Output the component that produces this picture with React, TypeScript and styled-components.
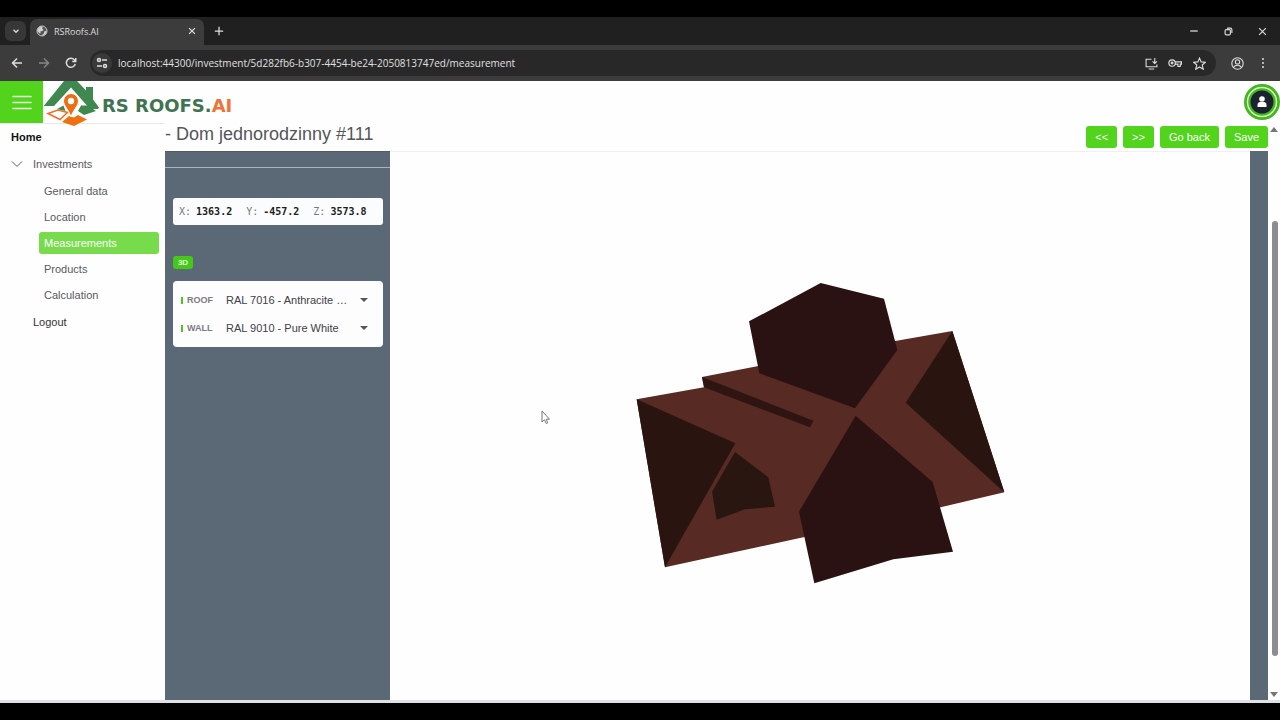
import React from "react";
import styled, { createGlobalStyle } from "styled-components";

const GlobalStyle = createGlobalStyle`
  * { box-sizing: border-box; }
  body { margin: 0; background: #000; }
  button, select, input { font: inherit; }
  svg { display: block; flex: none; }
`;

const green = "#52d31c";
const slate = "#5b6976";

const Screen = styled.div`
  min-height: 100vh;
  display: flex;
  flex-direction: column;
  padding: 17px 0;
  background: #000;
  font-family: "Liberation Sans", Arial, sans-serif;
  font-size: 11px;
`;

const TabStrip = styled.div`
  height: 28px;
  display: flex;
  align-items: center;
  padding-left: 5px;
  background: #202020;
  color: #dcdcdc;
`;

const ChromeButton = styled.button<{ $w?: number; $dim?: boolean }>`
  width: ${(p) => p.$w ?? 26}px;
  height: 20px;
  display: flex;
  flex: none;
  align-items: center;
  justify-content: center;
  padding: 0;
  border: 0;
  background: transparent;
  color: ${(p) => (p.$dim ? "#868686" : "#dedede")};
`;

const TabSearch = styled(ChromeButton)`
  border-radius: 6px;
  background: #373737;
`;

const Tab = styled.div`
  width: 174px;
  height: 26px;
  align-self: flex-end;
  display: flex;
  align-items: center;
  gap: 6px;
  margin-left: 4px;
  padding: 0 4px 2px 6px;
  border-radius: 7px 7px 0 0;
  background: #3c3c3c;
  font: 9px "Open Sans", sans-serif;
  color: #dedede;
`;

const TabTitle = styled.span`
  flex: 1;
`;

const WindowControls = styled.div`
  display: flex;
  margin-left: auto;
`;

const Toolbar = styled.div`
  height: 36px;
  display: flex;
  align-items: center;
  padding: 0 4px;
  background: #3c3c3c;
`;

const AddressBar = styled.div`
  flex: 1;
  height: 26px;
  display: flex;
  align-items: center;
  margin: 0 8px 0 6px;
  padding: 0 5px 0 2px;
  border-radius: 13px;
  background: #282828;
`;

const SiteInfo = styled(ChromeButton)`
  width: 20px;
  border-radius: 10px;
  background: #3a3a3a;
`;

const Address = styled.input`
  flex: 1;
  min-width: 0;
  margin-left: 6px;
  padding: 0;
  border: 0;
  outline: 0;
  background: transparent;
  font: 10px "Open Sans", sans-serif;
  color: #e0e0e0;
`;

const Page = styled.div`
  flex: 1;
  display: flex;
  flex-direction: column;
  background: #fefefe;
  border-bottom: 3px solid #dfe2e5;
`;

const Header = styled.header`
  position: relative;
  z-index: 1;
  height: 42px;
  display: flex;
  align-items: flex-start;
`;

const MenuButton = styled.button`
  width: 43px;
  height: 42px;
  display: flex;
  align-items: center;
  justify-content: center;
  padding: 0;
  border: 0;
  background: ${green};
`;

const Brand = styled.a`
  display: flex;
  align-items: flex-start;
  gap: 2px;
  text-decoration: none;
`;

const BrandName = styled.span`
  margin-top: 15px;
  font: 700 18px/20px "DejaVu Sans", sans-serif;
  color: #3f7351;
`;

const BrandAccent = styled.span`
  color: #ee7439;
`;

const Avatar = styled.button`
  width: 36px;
  height: 36px;
  margin: 3px 0 0 auto;
  padding: 0;
  border: 0;
  background: transparent;
`;

const Body = styled.div`
  flex: 1;
  display: flex;
`;

const Sidebar = styled.nav`
  width: 165px;
  flex: none;
  padding: 2px 6px 0 11px;
  border-top: 1px solid #ebe8ec;
`;

const NavList = styled.ul<{ $nested?: boolean }>`
  display: flex;
  flex-direction: column;
  gap: ${(p) => (p.$nested ? 4 : 5)}px;
  margin: ${(p) => (p.$nested ? "5px 0 0 28px" : "0")};
  padding: 0;
  list-style: none;
`;

const NavLink = styled.a<{ $kind?: "strong" | "active" | "child" | "dark"; $indent?: number }>`
  height: 22px;
  display: flex;
  align-items: center;
  padding-left: ${(p) => p.$indent ?? 0}px;
  border-radius: 3px;
  gap: 10px;
  text-decoration: none;
  font-weight: ${(p) => (p.$kind === "strong" ? 700 : 400)};
  background: ${(p) => (p.$kind === "active" ? "#77db4b" : "transparent")};
  color: ${(p) =>
    p.$kind === "active" ? "#fff" : p.$kind === "strong" ? "#111" : p.$kind === "dark" ? "#333" : "#5a5a5f"};
`;

const Main = styled.main`
  flex: 1;
  min-width: 0;
  display: flex;
  flex-direction: column;
`;

const TitleRow = styled.div`
  height: 28px;
  display: flex;
  align-items: center;
  justify-content: space-between;
`;

const Title = styled.h1`
  margin: 0 0 6px;
  font-size: 18px;
  line-height: 22px;
  font-weight: 400;
  color: #55555a;
`;

const Actions = styled.div`
  display: flex;
  gap: 6px;
`;

const ActionButton = styled.button`
  height: 22px;
  padding: 0 9px;
  border: 0;
  border-radius: 3px;
  background: ${green};
  color: #fff;
`;

const Workspace = styled.div`
  flex: 1;
  display: flex;
  padding-right: 18px;
  background: ${slate};
`;

const Panel = styled.aside`
  width: 225px;
  flex: none;
  display: flex;
  flex-direction: column;
  align-items: flex-start;
  border-top: 1px solid #585667;
`;

const PanelHead = styled.div`
  width: 100%;
  height: 16px;
  border-bottom: 1px solid #a3b5bf;
`;

const Coordinates = styled.dl`
  width: 210px;
  height: 27px;
  display: flex;
  align-items: center;
  gap: 14px;
  margin: 30px 0 0 8px;
  padding: 0 6px;
  border-radius: 3px;
  background: #fbfcfd;
  font: 10px "DejaVu Sans Mono", monospace;
`;

const Coordinate = styled.div`
  display: flex;
  gap: 5px;
`;

const Axis = styled.dt`
  color: #777;
`;

const AxisValue = styled.dd`
  margin: 0;
  font-weight: 700;
  color: #1c1c1c;
`;

const ModeButton = styled.button`
  width: 20px;
  height: 13px;
  margin: 31px 0 0 8px;
  padding: 0;
  border: 0;
  border-radius: 3px;
  background: #46c81a;
  font-size: 8px;
  line-height: 13px;
  font-weight: 700;
  color: #dcffd0;
`;

const ColorCard = styled.div`
  width: 210px;
  display: flex;
  flex-direction: column;
  margin: 12px 0 0 8px;
  padding: 5px 8px;
  border-radius: 4px;
  background: #fdfdfe;
`;

const ColorRow = styled.div`
  position: relative;
  height: 28px;
  display: flex;
  align-items: center;
`;

const ColorLabel = styled.label`
  width: 45px;
  display: flex;
  align-items: center;
  gap: 4px;
  font-size: 9px;
  font-weight: 700;
  color: #7b7b80;

  &::before {
    content: "";
    width: 2px;
    height: 7px;
    background: #4fc22b;
  }
`;

const ColorSelect = styled.select`
  width: 148px;
  padding: 0 24px 0 0;
  border: 0;
  outline: 0;
  appearance: none;
  background: transparent;
  color: #404045;
`;

const Caret = styled.svg`
  position: absolute;
  right: 7px;
  pointer-events: none;
`;

const Viewer = styled.section`
  position: relative;
  flex: 1;
  min-width: 0;
  display: flex;
  background: #fefefe;
  border-top: 1px solid #f0f0f2;
`;

const Model = styled.svg`
  width: 100%;
  aspect-ratio: 860 / 548;
`;

const Pointer = styled.svg`
  position: absolute;
  left: 151px;
  top: 258px;
`;

const ScrollBar = styled.div`
  width: 12px;
  flex: none;
  display: flex;
  flex-direction: column;
  align-items: center;
  padding: 4px 0 3px;
  color: #777;
`;

const ScrollTrack = styled.div`
  flex: 1;
  width: 6px;
  margin: 0 0 0 1px;
  padding: 89px 0 36px;
  display: flex;
`;

const ScrollThumb = styled.div`
  flex: 1;
  border-radius: 3px;
  background: #8d8d8d;
`;

const Icon = ({ size = 12, children, box = 24, width = 2 }: { size?: number; box?: number; width?: number; children: React.ReactNode }) => (
  <svg width={size} height={size} viewBox={`0 0 ${box} ${box}`} fill="none" stroke="currentColor" strokeWidth={width} aria-hidden="true">
    {children}
  </svg>
);

const Globe = () => (
  <svg width="12" height="12" viewBox="0 0 12 12" aria-hidden="true">
    <circle cx="6" cy="6" r="5" fill="#555" stroke="#c8c8c8" />
    <path d="M1.2 5.4 2.5 2.8 5.3 1.2 6.8 2 6 3.6 7.4 4.4 6.6 6 4.2 6.4 4.8 8 3.2 8.3Z M8.2 6.2 10.8 6 9.8 9 6.6 10.8 6.4 9.2 8 8.6Z" fill="#d0d0d0" />
  </svg>
);

const RoofLogo = () => (
  <svg width="57" height="45" viewBox="0 0 57 45" aria-hidden="true">
    <path d="M0.700 25 21 0H34L43 9.500V6H50V18.500L56 26.500 55 28H47L28 6.500 11 25Z" fill="#3f8850" />
    <path d="M14 28 20.500 24.500 22.500 30Z M35 30 38 24.500H45L53 30 41 34Z" fill="#3f8850" />
    <path d="M5 32.500 15 29 24.500 31.500 17 38.500Z" fill="#fff" stroke="#ee7025" strokeWidth="1.500" />
    <path d="M19 41 26 35 31 36.500 35 34 44 38.500 31 45Z" fill="#ee7010" />
    <path d="M28 36C26 29 20.500 25 20.500 20A7.500 7.500 0 0 1 35.500 20C35.500 25 30 29 28 36Z" fill="#ed6d12" stroke="#fff" />
    <circle cx="28" cy="20" r="3.200" fill="#fff" />
  </svg>
);

const RoofModel = () => (
  <Model viewBox="-690 -354 2580 1644" role="img" aria-label="3D roof model">
    <polygon fill="#572a24" points="50,388 252,352 246,321 415,288 830,212 997,183 1153,667 965,711 550,802 135,892" />
    <polygon fill="#2b1212" points="387,154 602,39 792,86 832,240 705,415 418,310" />
    <polygon fill="#291410" points="997,183 1153,667 857,398" />
    <polygon fill="#291410" points="50,388 346,520 135,892" />
    <polygon fill="#291610" points="345,546 445,622 465,710 375,718 290,749 276,665" />
    <polygon fill="#2e1512" points="246,321 580,452 570,472 252,352" />
    <polygon fill="#2b1212" points="707,437 938,636 999,845 820,868 583,940 537,725" />
  </Model>
);

const axes = [
  ["X:", "1363.2"],
  ["Y:", "-457.2"],
  ["Z:", "3573.8"],
];

const finishes = [
  { id: "roof", label: "ROOF", value: "RAL 7016 - Anthracite …" },
  { id: "wall", label: "WALL", value: "RAL 9010 - Pure White" },
];

const pages = ["General data", "Location", "Measurements", "Products", "Calculation"];

const Browser = () => (
  <>
    <TabStrip>
      <TabSearch $w={21} aria-label="Search tabs"><Icon size={10} width={3}><path d="m6 9 6 6 6-6" /></Icon></TabSearch>
      <Tab>
        <Globe />
        <TabTitle>RSRoofs.AI</TabTitle>
        <ChromeButton $w={16} aria-label="Close tab"><Icon size={10} width={3}><path d="m5 5 14 14M19 5 5 19" /></Icon></ChromeButton>
      </Tab>
      <ChromeButton $w={30} aria-label="New tab"><Icon size={10} width={3}><path d="M12 2v20M2 12h20" /></Icon></ChromeButton>
      <WindowControls>
        <ChromeButton $w={34} aria-label="Minimize"><Icon size={10} width={3}><path d="M3 12h18" /></Icon></ChromeButton>
        <ChromeButton $w={34} aria-label="Restore"><Icon size={9} width={3}><rect x="3" y="7" width="14" height="14" rx="3" /><path d="M8 3h9a4 4 0 0 1 4 4v9" /></Icon></ChromeButton>
        <ChromeButton $w={35} aria-label="Close"><Icon size={9} width={3}><path d="m3 3 18 18M21 3 3 21" /></Icon></ChromeButton>
      </WindowControls>
    </TabStrip>
    <Toolbar>
      <ChromeButton $w={26} aria-label="Back"><Icon size={12} width={3}><path d="M22 12H4M12 3l-9 9 9 9" /></Icon></ChromeButton>
      <ChromeButton $w={28} $dim aria-label="Forward"><Icon size={12} width={3}><path d="M2 12h18M12 3l9 9-9 9" /></Icon></ChromeButton>
      <ChromeButton $w={26} aria-label="Reload"><Icon size={12} width={3}><path d="M20.500 14a9 9 0 1 1-2-8.500l3 3.500M21.500 2v7h-7" /></Icon></ChromeButton>
      <AddressBar>
        <SiteInfo aria-label="Site information"><Icon size={12} width={3}><circle cx="6" cy="6" r="3" /><path d="M12 6h10M2 18h10" /><circle cx="18" cy="18" r="3" /></Icon></SiteInfo>
        <Address aria-label="Address" readOnly value="localhost:44300/investment/5d282fb6-b307-4454-be24-2050813747ed/measurement" />
        <ChromeButton $w={24} aria-label="Install app"><Icon size={13} width={2}><path d="M12 4H2v14h20v-4M7 22h10M18 2v9M14 8l4 4 4-4" /></Icon></ChromeButton>
        <ChromeButton $w={24} aria-label="Passwords"><Icon size={14}><circle cx="7" cy="12" r="5.500" /><circle cx="7" cy="12" r="1.500" /><path d="M12 10h11v4h-2v4h-4v-4h-5" /></Icon></ChromeButton>
        <ChromeButton $w={24} aria-label="Bookmark"><Icon size={13}><path d="m12 2 3 7 8 .7-6 5 2 8-7-4.300-7 4.300 2-8-6-5L9 9Z" /></Icon></ChromeButton>
      </AddressBar>
      <ChromeButton $w={26} aria-label="Profile"><Icon size={13}><circle cx="12" cy="12" r="10.500" /><circle cx="12" cy="9" r="4" /><path d="M5 19c3-5 11-5 14 0" /></Icon></ChromeButton>
      <ChromeButton $w={26} aria-label="More"><svg width="12" height="12" fill="currentColor"><circle cx="6" cy="2" r="1" /><circle cx="6" cy="6" r="1" /><circle cx="6" cy="10" r="1" /></svg></ChromeButton>
    </Toolbar>
  </>
);

export default function App() {
  return (
    <Screen>
      <GlobalStyle />
      <Browser />
      <Page>
        <Header>
          <MenuButton aria-label="Menu">
            <svg width="20" height="15" viewBox="0 0 20 15" stroke="#e9fbe0" strokeWidth="1.500" strokeLinecap="round"><path d="M1 1.500H19M1 7.500H19M1 13.500H19" /></svg>
          </MenuButton>
          <Brand href="#">
            <RoofLogo />
            <BrandName>RS ROOFS.<BrandAccent>AI</BrandAccent></BrandName>
          </Brand>
          <Avatar aria-label="Account">
            <svg width="36" height="36" viewBox="0 0 36 36">
              <circle cx="18" cy="18" r="18" fill="#45b51f" />
              <circle cx="18" cy="18" r="14.500" fill="#45b51f" stroke="#d4ffc2" strokeWidth="1.500" />
              <circle cx="18" cy="18" r="11.500" fill="#1b2230" />
              <circle cx="18" cy="15" r="2.800" fill="#fff" />
              <path d="M13.500 23v-2a3 3 0 0 1 3-3h3a3 3 0 0 1 3 3v2Z" fill="#fff" />
            </svg>
          </Avatar>
        </Header>
        <Body>
          <Sidebar>
            <NavList>
              <li><NavLink href="#" $kind="strong">Home</NavLink></li>
              <li>
                <NavLink href="#"><Icon size={12}><path d="m2 7 10 10L22 7" /></Icon>Investments</NavLink>
                <NavList $nested>
                  {pages.map((p) => (
                    <li key={p}><NavLink href="#" $indent={5} $kind={p === "Measurements" ? "active" : "child"}>{p}</NavLink></li>
                  ))}
                </NavList>
              </li>
              <li><NavLink href="#" $kind="dark" $indent={22}>Logout</NavLink></li>
            </NavList>
          </Sidebar>
          <Main>
            <TitleRow>
              <Title>- Dom jednorodzinny #111</Title>
              <Actions>
                <ActionButton>&lt;&lt;</ActionButton>
                <ActionButton>&gt;&gt;</ActionButton>
                <ActionButton>Go back</ActionButton>
                <ActionButton>Save</ActionButton>
              </Actions>
            </TitleRow>
            <Workspace>
              <Panel>
                <PanelHead />
                <Coordinates>
                  {axes.map(([axis, value]) => (
                    <Coordinate key={axis}><Axis>{axis}</Axis><AxisValue>{value}</AxisValue></Coordinate>
                  ))}
                </Coordinates>
                <ModeButton>3D</ModeButton>
                <ColorCard>
                  {finishes.map((f) => (
                    <ColorRow key={f.id}>
                      <ColorLabel htmlFor={f.id}>{f.label}</ColorLabel>
                      <ColorSelect id={f.id}><option>{f.value}</option></ColorSelect>
                      <Caret width="8" height="4" viewBox="0 0 8 4"><path d="M0 0H8L4 4Z" fill="#55555a" /></Caret>
                    </ColorRow>
                  ))}
                </ColorCard>
              </Panel>
              <Viewer>
                <RoofModel />
                <Pointer width="9" height="15" viewBox="0 0 9 15"><path d="M1 1V12L3.500 9.800 5.200 13.500 6.800 12.800 5.200 9.200H8.500Z" fill="#fff" stroke="#77777c" /></Pointer>
              </Viewer>
            </Workspace>
          </Main>
          <ScrollBar aria-hidden="true">
            <svg width="8" height="5" viewBox="0 0 8 5"><path d="M4 0 8 5H0Z" fill="currentColor" /></svg>
            <ScrollTrack><ScrollThumb /></ScrollTrack>
            <svg width="8" height="5" viewBox="0 0 8 5"><path d="M0 0H8L4 5Z" fill="currentColor" /></svg>
          </ScrollBar>
        </Body>
      </Page>
    </Screen>
  );
}
